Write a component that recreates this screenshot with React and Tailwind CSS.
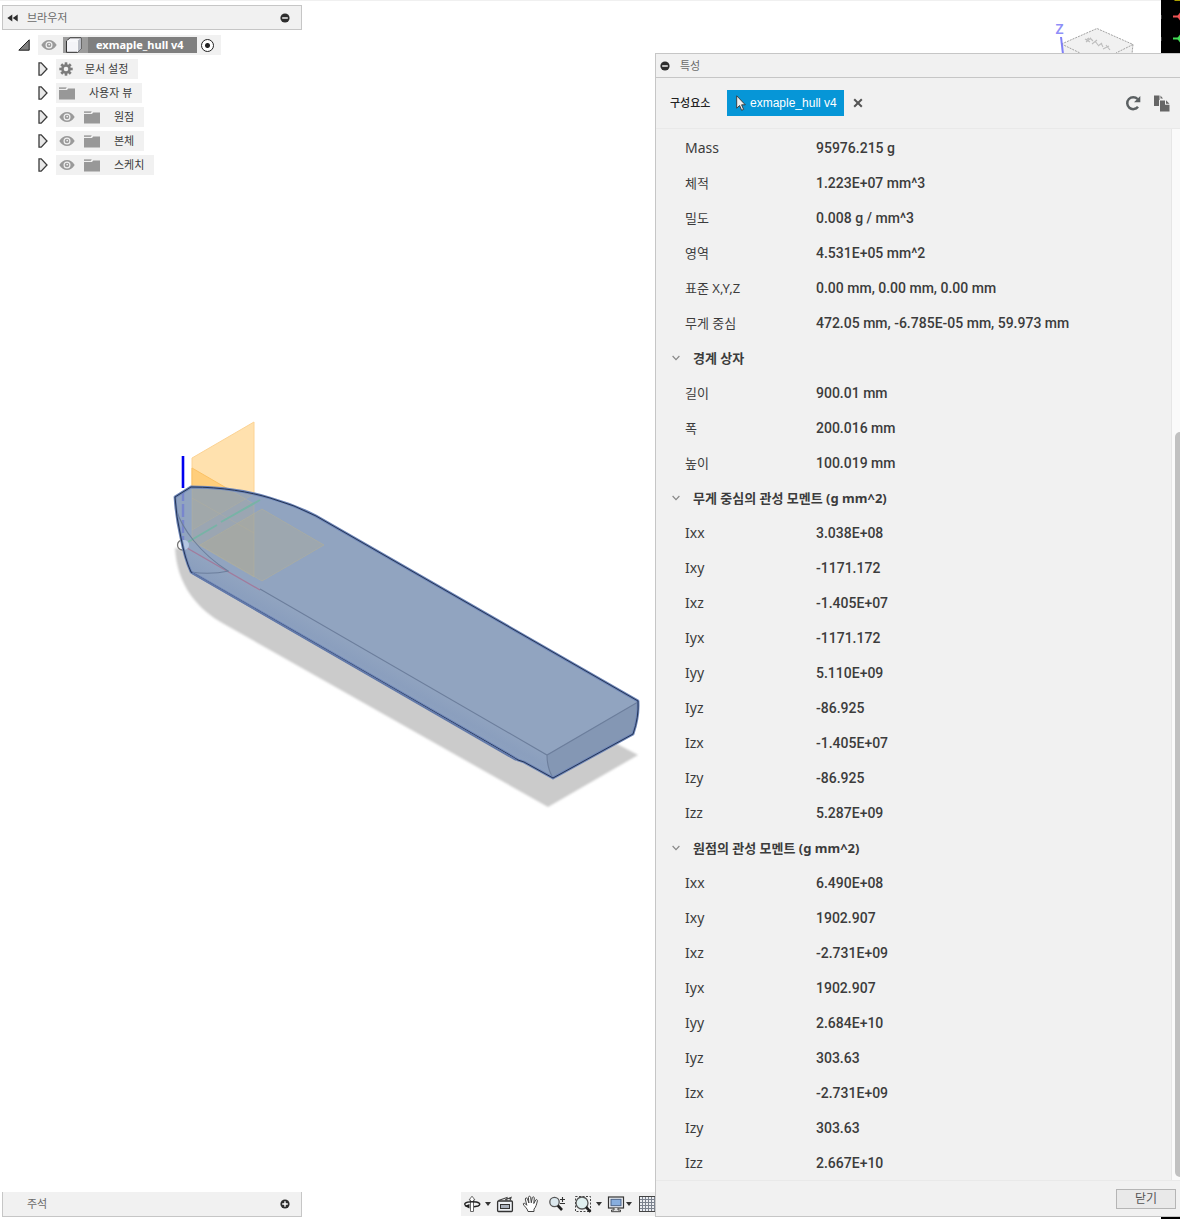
import React from "react";

const KR = "font-['Noto_Sans','Noto_Sans_CJK_KR',sans-serif]";

const sections = [
  {
    title: null,
    rows: [
      ["Mass", "95976.215 g"],
      ["체적", "1.223E+07 mm^3"],
      ["밀도", "0.008 g / mm^3"],
      ["영역", "4.531E+05 mm^2"],
      ["표준 X,Y,Z", "0.00 mm, 0.00 mm, 0.00 mm"],
      ["무게 중심", "472.05 mm, -6.785E-05 mm, 59.973 mm"],
    ],
  },
  {
    title: "경계 상자",
    rows: [
      ["길이", "900.01 mm"],
      ["폭", "200.016 mm"],
      ["높이", "100.019 mm"],
    ],
  },
  {
    title: "무게 중심의 관성 모멘트 (g mm^2)",
    rows: [
      ["Ixx", "3.038E+08"],
      ["Ixy", "-1171.172"],
      ["Ixz", "-1.405E+07"],
      ["Iyx", "-1171.172"],
      ["Iyy", "5.110E+09"],
      ["Iyz", "-86.925"],
      ["Izx", "-1.405E+07"],
      ["Izy", "-86.925"],
      ["Izz", "5.287E+09"],
    ],
  },
  {
    title: "원점의 관성 모멘트 (g mm^2)",
    rows: [
      ["Ixx", "6.490E+08"],
      ["Ixy", "1902.907"],
      ["Ixz", "-2.731E+09"],
      ["Iyx", "1902.907"],
      ["Iyy", "2.684E+10"],
      ["Iyz", "303.63"],
      ["Izx", "-2.731E+09"],
      ["Izy", "303.63"],
      ["Izz", "2.667E+10"],
    ],
  },
];

function RoundSign({ plus }) {
  return (
    <svg viewBox="0 0 10 10" className="block size-[10px]" aria-hidden="true">
      <circle cx="5" cy="5" r="4.6" fill="#2d2d2d" />
      <path d={plus ? "M2.2 5h5.6M5 2.2v5.6" : "M2.2 5h5.6"} stroke="#fff" strokeWidth="1.4" />
    </svg>
  );
}

function Eye() {
  return (
    <svg viewBox="0 0 16 12" className="block h-3 w-4 shrink-0" aria-hidden="true">
      <path d="M.3 6C2.4 2.6 5 1 8 1s5.600 1.600 7.700 5C13.600 9.400 11 11 8 11S2.400 9.400.3 6z" fill="#9a9a9a" />
      <circle cx="8" cy="6" r="3.500" fill="#f1f1f1" />
      <circle cx="8" cy="6" r="2.300" fill="#9a9a9a" />
      <circle cx="8.200" cy="5.600" r=".9" fill="#f1f1f1" />
    </svg>
  );
}

function Folder() {
  return (
    <svg viewBox="0 0 16 13" className="block h-[13px] w-4 shrink-0" aria-hidden="true">
      <path d="M0 3h8L9.200 1.500H16v11H0z" fill="#989898" />
      <path d="M0 .2h7.800L6.600 1.900H0z" fill="#a6a6a6" />
    </svg>
  );
}

function Gear() {
  return (
    <svg viewBox="0 0 14 14" className="block size-[14px] shrink-0" aria-hidden="true">
      <g fill="#7c7c7c">
        {[0, 45, 90, 135].map((a) => (
          <rect key={a} x="5.700" y=".3" width="2.600" height="13.400" transform={`rotate(${a} 7 7)`} />
        ))}
        <circle cx="7" cy="7" r="4.800" />
      </g>
      <circle cx="7" cy="7" r="2.300" fill="#f1f1f1" />
    </svg>
  );
}

function Expander() {
  return (
    <button type="button" aria-label="펼치기" className="mr-2 block w-[10px] shrink-0">
      <svg viewBox="0 0 10 14" className="block h-[14px] w-[10px]" aria-hidden="true">
        <path d="M1 .9h2.200L9 7 3.200 13.200H1z" fill="#e8e8e8" stroke="#3a3a3a" strokeWidth="1.300" />
      </svg>
    </button>
  );
}

function Browser() {
  const nodes = [
    { name: "문서 설정", icon: "gear" },
    { name: "사용자 뷰", icon: "folder" },
    { name: "원점", icon: "folder", eye: true },
    { name: "본체", icon: "folder", eye: true },
    { name: "스케치", icon: "folder", eye: true },
  ];
  return (
    <nav className="w-[300px]" aria-label="브라우저">
      <header className="flex h-[25px] items-center border border-[#c6c6c6] bg-[#f1f1f1] pr-[11px] pl-1">
        <button type="button" aria-label="접기">
          <svg viewBox="0 0 11 8" className="block h-2 w-[11px]" aria-hidden="true">
            <path d="M5.300.6v6.800L.3 4zM10.700.6v6.800L5.700 4z" fill="#2d2d2d" />
          </svg>
        </button>
        <h2 className="ml-[9px] flex-1 text-[11px] leading-4 text-[#6a6a6a]">브라우저</h2>
        <button type="button" aria-label="최소화">
          <RoundSign />
        </button>
      </header>
      <ul className="mt-[5px] flex flex-col gap-1 text-[11px] text-[#3c3c3c]">
        <li className="flex h-5 items-center pl-4">
          <button type="button" aria-label="접기" className="mr-2">
            <svg viewBox="0 0 12 12" className="block size-3" aria-hidden="true">
              <path d="M.8 11.200L11.200.8v10.400z" fill="#808080" stroke="#222" strokeWidth="1" />
            </svg>
          </button>
          <div className="flex h-5 items-center bg-[#f1f1f1] pr-[7px] pl-[3px]">
            <Eye />
            <div className="ml-[6px] flex h-4 items-center bg-[#7f7f7f] pr-[13px]">
              <span className="flex h-4 w-[25px] items-center bg-[#9c9c9c] pl-[2px]">
                <svg viewBox="0 0 18 16" className="block h-4 w-[18px]" aria-hidden="true">
                  <path d="M1.500 4L5 .8h11V12l-3.500 3.300h-11z" fill="#f4f4f8" stroke="#333" strokeWidth="1" />
                  <path d="M12.500 4L16 .8V12l-3.500 3.300z" fill="#b9bcc4" />
                  <path d="M2 4h10.500v11" fill="none" stroke="#fff" strokeWidth=".8" />
                </svg>
              </span>
              <span className="ml-2 text-[11px] leading-4 font-bold whitespace-nowrap text-white">exmaple_hull v4</span>
            </div>
            <input
              type="radio"
              defaultChecked
              aria-label="활성 구성요소"
              className="ml-1 size-[13px] appearance-none rounded-full border border-[#222] bg-white bg-[radial-gradient(circle,#222_2px,transparent_3px)]"
            />
          </div>
        </li>
        {nodes.map((n) => (
          <li key={n.name} className="flex h-5 items-center pl-9">
            <Expander />
            <div className="flex h-5 items-center bg-[#f1f1f1] pr-[10px] pl-[3px]">
              {n.eye && (
                <span className="mr-[9px]">
                  <Eye />
                </span>
              )}
              {n.icon === "gear" ? <Gear /> : <Folder />}
              <span className={n.icon === "gear" ? "ml-3 leading-5" : "ml-[14px] leading-5"}>{n.name}</span>
            </div>
          </li>
        ))}
      </ul>
    </nav>
  );
}

const HULL =
  "M175 497L191 487C222 487 250 492 270 498Q295 505 316 516L638 701Q639 717 633 734L553 778L524 762L518 760L508 754L191 572Q185 559 181 538Q176 516 175 497z";

function Hull() {
  return (
    <svg viewBox="160 410 490 410" className="mt-[235px] ml-[158px] block h-[410px] w-[490px] shrink-0" role="img" aria-label="선체 모델">
      <defs>
        <filter id="soft" x="-5%" y="-5%" width="110%" height="110%">
          <feGaussianBlur stdDeviation="1.200" />
        </filter>
        <linearGradient id="side" gradientUnits="userSpaceOnUse" x1="380" y1="657" x2="366" y2="682">
          <stop offset="0" stopColor="#91a4c0" />
          <stop offset=".5" stopColor="#8b9fbe" />
          <stop offset="1" stopColor="#8ea2c0" />
        </linearGradient>
        <clipPath id="body">
          <path d={HULL} />
        </clipPath>
      </defs>
      <path d="M175 548C177 585 197 609 224 624L548 807L638 755L600 735L300 570z" fill="#cbcbcb" filter="url(#soft)" />
      <path d="M192 458L254 422V494L192 530z" fill="#ffe1ae" stroke="#fcd394" />
      <path d="M192 468L254 504V577L192 541z" fill="#ffce7c" stroke="#fbc164" />
      <path d="M183 456v32" stroke="#0000f0" strokeWidth="2.600" />
      <circle cx="182.500" cy="545" r="5" fill="#fff" stroke="#777" strokeWidth="1.300" />
      <path d={HULL} fill="#91a4c0" />
      <path d="M176 509C182 529 200 553 228 571L547 755L553 778L524 762L508 754L191 572Q185 559 181 538z" fill="url(#side)" />
      <path d="M547 755L638 702Q639 717 633 734L553 778Q547 768 547 755z" fill="#8497b4" />
      <g clipPath="url(#body)">
        <path d="M192 458L254 422V494L192 530z" fill="#b8ad8d" fillOpacity=".22" />
        <path d="M192 468L254 504V577L192 541z" fill="#b8ad8d" fillOpacity=".26" stroke="#b8b39a" strokeOpacity=".4" />
        <path d="M192 498L254 533M192 530L254 494" stroke="#b8b39a" strokeOpacity=".35" />
        <path d="M262 509L324 545L262 581L200 545z" fill="#b8ad8d" fillOpacity=".32" stroke="#b5b198" strokeOpacity=".5" />
        <path d="M183 488v52" stroke="#7886cd" strokeWidth="2.400" strokeDasharray="13 3" />
        <path d="M188 542L217 525M221 522L260 500" stroke="#78b3a6" strokeWidth="2" />
        <path d="M187 548L260 590" stroke="#a27b9c" strokeWidth="1.400" />
        <circle cx="184" cy="545" r="5" fill="#b4c6e2" />
      </g>
      <g fill="none" stroke="#6c7e9c" strokeWidth="1.100">
        <path d="M176 509C182 529 200 553 228 571" />
        <path d="M260 589L547 755L638 702M547 755Q547 768 553 778" />
        <path d="M191 572Q210 575 229 571" />
      </g>
      <path d={HULL} fill="none" stroke="#6e86b8" strokeWidth="2.800" strokeLinejoin="round" />
      <path d={HULL} fill="none" stroke="#1b2a4a" strokeWidth=".9" />
      <path d="M192 573L516 760" stroke="#6279a9" strokeWidth="2" />
    </svg>
  );
}

function Caret() {
  return (
    <svg viewBox="0 0 6 4" className="block h-1 w-[6px] shrink-0" aria-hidden="true">
      <path d="M0 0h6L3 4z" fill="#333" />
    </svg>
  );
}

function Tool({ label, caret, spacing, children }) {
  return (
    <button type="button" aria-label={label} className={"flex shrink-0 items-center " + spacing}>
      <svg viewBox="0 0 18 18" className="block size-[18px] shrink-0" fill="none" aria-hidden="true">
        {children}
      </svg>
      {caret && (
        <span className={caret}>
          <Caret />
        </span>
      )}
    </button>
  );
}

function Toolbar() {
  return (
    <div role="toolbar" aria-label="탐색" className="flex h-6 w-[194px] items-center overflow-hidden bg-[#f1f1f1] pl-[2px]">
      <Tool label="궤도" caret="ml-1" spacing="mr-[5px]">
        <path d="M7.500 16.500V5H6L9 1.200 12 5h-1.500v11.500z" fill="#fff" stroke="#666" />
        <path d="M4 11.500C-.5 9 2 6.800 9 6.800S19 9 15 11l-4 .8" stroke="#222" strokeWidth="1.400" />
        <path d="M1.500 11l5-2v4.500z" fill="#222" />
      </Tool>
      <Tool label="보기" spacing="mr-2">
        <path d="M2.500 5.500L11 2.500v3M9 5l6-2.500-1 3" stroke="#444" strokeWidth="1.200" />
        <rect x="1.600" y="6" width="14.800" height="10.500" rx="1" fill="#eef1f5" stroke="#333" strokeWidth="1.300" />
        <rect x="4.500" y="9.500" width="9" height="4" fill="#a9b0bb" stroke="#333" />
      </Tool>
      <Tool label="초점이동" spacing="mr-2">
        <path d="M6 16.500C5.500 13 1.500 11 1.200 8.800c.8-1.300 2.200-.3 3.600 1.500L3.300 4c.2-1.500 1.800-1.400 2.200 0l1.400 4-.5-5.800c.3-1.300 1.900-1.300 2.200 0l.7 5.600 1-5.200c.5-1.200 2-.9 2 .4l-.5 5.500 1.900-3.500c.8-.9 1.900-.3 1.700.8-.7 3-1.400 6.200-3.400 8.300v2.400z" fill="#fff" stroke="#444" strokeWidth="1" />
      </Tool>
      <Tool label="줌" spacing="mr-2">
        <circle cx="6.500" cy="7" r="4.700" fill="#dce8ee" stroke="#555" strokeWidth="1.300" />
        <path d="M9.800 10.500L14 15" stroke="#222" strokeWidth="2.600" />
        <path d="M12 4.500h5M14.500 2v5M12 8.500h5" stroke="#333" strokeWidth="1.100" />
      </Tool>
      <Tool label="창 줌" caret="ml-1" spacing="mr-[5px]">
        <rect x="1.500" y="1.500" width="15" height="15" stroke="#444" strokeDasharray="2 1.500" />
        <circle cx="8" cy="8" r="6" fill="#e0efef" stroke="#555" strokeWidth="1.300" />
        <path d="M12 12l4.500 4.800" stroke="#222" strokeWidth="2.600" />
      </Tool>
      <Tool label="화면표시 설정" caret="ml-px" spacing="mr-[6px]">
        <rect x="1.500" y="2" width="15" height="11" fill="#eef0f4" stroke="#333" strokeWidth="1.200" />
        <rect x="4" y="4.300" width="10" height="6.400" fill="#88aede" stroke="#4b6287" />
        <path d="M7 13v2H4.500v1.700h9V15H11v-2" fill="#ddd" stroke="#444" />
      </Tool>
      <Tool label="그리드" spacing="">
        <rect x="1.500" y="1.500" width="17" height="15" fill="#eceef2" stroke="#444" />
        <path d="M4.500 2v14M7.500 2v14M10.500 2v14M13.500 2v14M16.500 2v14M2 4.500h16M2 7.500h16M2 10.500h16M2 13.500h16" stroke="#7b828e" />
      </Tool>
    </div>
  );
}

function ViewCube() {
  return (
    <div className="flex h-[53px] justify-end">
      <div className="flex flex-1 justify-end border-t border-[#f0f0f0] pr-[27px]">
        <svg viewBox="1054 1 80 52" className="block h-[52px] w-20" role="img" aria-label="뷰 큐브">
          <path d="M1061.500 44L1097 28.500L1133 44.500V53H1062z" fill="#f1f1f1" />
          <path d="M1061.500 44L1097 28.500L1133 44.500L1116 53M1061.500 44L1080 53M1133 44.500l-1 9" fill="none" stroke="#a2a2a2" strokeDasharray="2 1" />
          <path d="M1061 37l2 17" stroke="#8080f6" strokeWidth="2" />
          <path
            d="M1085 39l5 3M1086 42l5-4M1090 38l3 3M1092 44l5-4M1095 41l3 4M1098 46l4-3M1101 43l2 4M1103 49l6-3M1106 45l4 5M1086 40l3-2"
            stroke="#bdbdbd"
            strokeWidth="1.100"
          />
          <text x="1055.500" y="34" fontSize="14" fontFamily="Noto Sans, sans-serif" fontWeight="600" fill="#8f8ff8">
            Z
          </text>
        </svg>
      </div>
      <svg viewBox="0 0 19 53" className="block h-[53px] w-[19px] bg-black" aria-hidden="true">
        <path d="M13.500 0h5.500" stroke="#aaa000" strokeWidth="2" />
        <path d="M12 16.500h7" stroke="#ef5353" strokeWidth="2" />
        <path d="M16 16.500l3-4v8z" fill="#ef5353" />
        <path d="M12 38.500h7" stroke="#42dc55" strokeWidth="2" />
        <path d="M16 38.500l3-4v8z" fill="#42dc55" />
        <path d="M0 15v4M0 37v4" stroke="#666" />
      </svg>
    </div>
  );
}

function Properties() {
  return (
    <aside className="flex flex-1 flex-col border-y border-l border-[#c6c6c6] bg-[#f1f1f1]">
      <header className="flex h-6 items-center gap-[10px] border-b border-[#c6c6c6] pl-1">
        <button type="button" aria-label="최소화">
          <RoundSign />
        </button>
        <h2 className="text-[11px] leading-4 text-[#6a6a6a]">특성</h2>
      </header>
      <div className="flex h-[51px] items-center border-b border-[#e9e9e9] pr-[10px] pl-[14px]">
        <span className="w-[57px] text-[11px] leading-4 font-medium text-[#222]">구성요소</span>
        <button type="button" className="flex h-[26px] items-center bg-[#0696d7] pr-[7px] pl-[9px] font-['Liberation_Sans',sans-serif] text-[12px] text-white">
          <svg viewBox="0 0 10 16" className="mr-1 block h-4 w-[10px]" aria-hidden="true">
            <path d="M.7.800v12.400l2.900-2.700 2 4.800 2-.9-2-4.600h3.700z" fill="#eee" stroke="#333" strokeWidth=".9" />
          </svg>
          <span className="whitespace-nowrap">exmaple_hull v4</span>
        </button>
        <button type="button" aria-label="선택 지우기" className="ml-[9px]">
          <svg viewBox="0 0 10 10" className="block size-[10px]" aria-hidden="true">
            <path d="M1.200 1.200l7.600 7.600M8.800 1.200L1.200 8.800" stroke="#555" strokeWidth="2" />
          </svg>
        </button>
        <button type="button" aria-label="새로 고침" className="ml-auto">
          <svg viewBox="0 0 16 16" className="block size-4" fill="none" aria-hidden="true">
            <path d="M12.600 4A6 6 0 1 0 13 11.800" stroke="#5b6062" strokeWidth="2.500" />
            <path d="M15.300 1v6.300H9z" fill="#5b6062" />
          </svg>
        </button>
        <button type="button" aria-label="복사" className="ml-3">
          <svg viewBox="0 0 17 17" className="block size-[17px]" fill="#666" aria-hidden="true">
            <path d="M1 .5h5.500V5H6v6H1zM7.500.500L10 3.500H7.500z" />
            <path d="M7 5.500h5v4.200h4.500v6.800H7zM13 5.200l3.500 3.600H13z" />
          </svg>
        </button>
      </div>
      <div className="flex flex-1 border-b border-[#e9e9e9]">
        <div className="flex-1 pt-px text-[13px] leading-5 text-[#3c3c3c]">
          {sections.map((s, i) => (
            <section key={i}>
              {s.title && (
                <h3 className="font-bold">
                  <button type="button" aria-expanded="true" className="flex h-[35px] items-center pl-4 text-left">
                    <svg viewBox="0 0 8 6" className="mr-[13px] block h-[6px] w-2" fill="none" aria-hidden="true">
                      <path d="M.6 1L4 4.600 7.400 1" stroke="#888" strokeWidth="1.200" />
                    </svg>
                    {s.title}
                  </button>
                </h3>
              )}
              <table className="w-full table-fixed border-collapse">
                <tbody>
                  {s.rows.map(([k, v]) => (
                    <tr key={k} className="h-[35px]">
                      <th scope="row" className={"w-40 p-0 pl-[29px] text-left font-normal " + (/^[A-Z]/.test(k) ? "text-[14px]" : "text-[13px]")}>
                        {k}
                      </th>
                      <td className="p-0 font-['Roboto',sans-serif] text-[14px] font-medium">{v}</td>
                    </tr>
                  ))}
                </tbody>
              </table>
            </section>
          ))}
        </div>
        <div className="flex w-[9px] flex-col items-end border-l border-[#e6e6e6] bg-[#fafafa] pt-[303px] pb-[3px]">
          <div className="w-[5px] flex-1 rounded-l-full bg-[#c1c1c1]" />
        </div>
      </div>
      <footer className="flex h-[35px] items-center justify-end pr-1">
        <button type="button" className="h-5 w-[60px] border border-[#b5b5b5] bg-[#e9e9e9] text-[12px] leading-4 text-[#555]">
          닫기
        </button>
      </footer>
    </aside>
  );
}

export default function App() {
  return (
    <div className={"flex min-h-screen bg-white " + KR}>
      <main className="flex min-w-0 flex-1 flex-col border-t border-[#f0f0f0] pt-1 pb-[2px] pl-[2px]">
        <Browser />
        <Hull />
        <div className="mt-auto flex items-start justify-between">
          <section className="flex h-[25px] w-[300px] items-center border border-t-0 border-[#c6c6c6] bg-[#f1f1f1] pr-[11px] pl-6">
            <h2 className="flex-1 text-[11px] leading-4 text-[#6a6a6a]">주석</h2>
            <button type="button" aria-label="추가">
              <RoundSign plus />
            </button>
          </section>
          <Toolbar />
        </div>
      </main>
      <div className="flex w-[525px] shrink-0 flex-col">
        <ViewCube />
        <Properties />
        <div className="flex h-[2px] justify-end">
          <div className="w-[19px] bg-black" />
        </div>
      </div>
    </div>
  );
}
